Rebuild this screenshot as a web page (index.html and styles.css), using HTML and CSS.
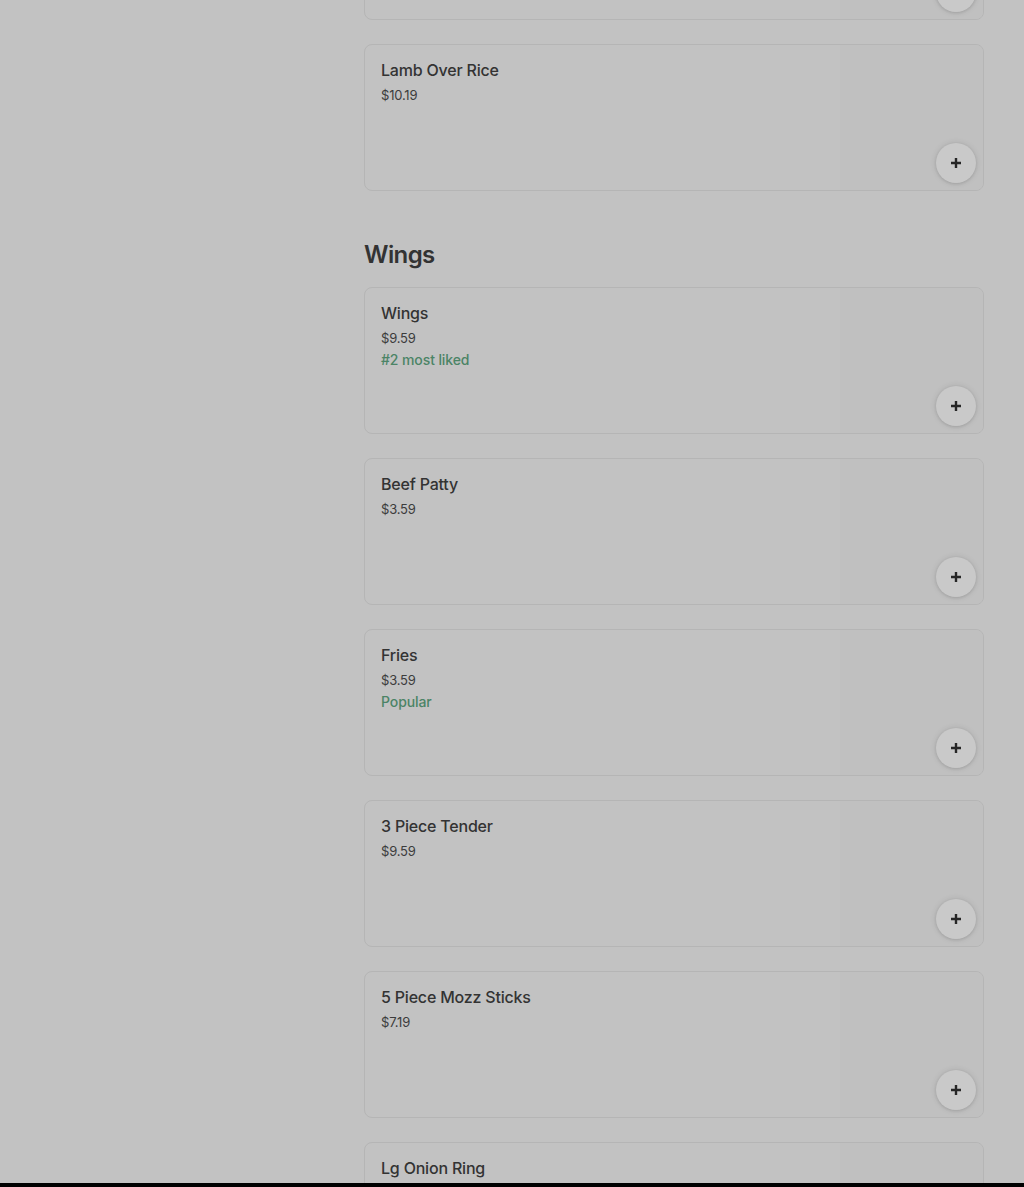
FILE: index.html
```html
<!DOCTYPE html>
<html lang="en">
<head>
  <meta charset="UTF-8">
  <meta name="viewport" content="width=device-width, initial-scale=1.0">
  <title>Menu</title>
  <link rel="stylesheet" href="styles.css">
</head>
<body>
  <div class="viewport">
    <div class="page">
      <aside class="sidebar"></aside>

      <main class="menu">
        <div class="item-list first-list">
          <div class="item-card">
            <div class="item-info"></div>
            <div class="item-image">
              <button class="add-btn" aria-label="Add"><svg viewBox="0 0 12 12" width="12" height="12"><path d="M6 1v10M1 6h10" stroke="#262626" stroke-width="2.4" fill="none"/></svg></button>
            </div>
          </div>
          <div class="item-card">
            <div class="item-info">
              <h3 class="item-name">Lamb Over Rice</h3>
              <p class="item-price">$10.19</p>
            </div>
            <div class="item-image">
              <button class="add-btn" aria-label="Add"><svg viewBox="0 0 12 12" width="12" height="12"><path d="M6 1v10M1 6h10" stroke="#262626" stroke-width="2.4" fill="none"/></svg></button>
            </div>
          </div>
        </div>

        <section class="menu-section">
          <h2 class="section-title">Wings</h2>
          <div class="item-list">
            <div class="item-card">
              <div class="item-info">
                <h3 class="item-name">Wings</h3>
                <p class="item-price">$9.59</p>
                <p class="item-badge">#2 most liked</p>
              </div>
              <div class="item-image">
                <button class="add-btn" aria-label="Add"><svg viewBox="0 0 12 12" width="12" height="12"><path d="M6 1v10M1 6h10" stroke="#262626" stroke-width="2.4" fill="none"/></svg></button>
              </div>
            </div>
            <div class="item-card">
              <div class="item-info">
                <h3 class="item-name">Beef Patty</h3>
                <p class="item-price">$3.59</p>
              </div>
              <div class="item-image">
                <button class="add-btn" aria-label="Add"><svg viewBox="0 0 12 12" width="12" height="12"><path d="M6 1v10M1 6h10" stroke="#262626" stroke-width="2.4" fill="none"/></svg></button>
              </div>
            </div>
            <div class="item-card">
              <div class="item-info">
                <h3 class="item-name">Fries</h3>
                <p class="item-price">$3.59</p>
                <p class="item-badge">Popular</p>
              </div>
              <div class="item-image">
                <button class="add-btn" aria-label="Add"><svg viewBox="0 0 12 12" width="12" height="12"><path d="M6 1v10M1 6h10" stroke="#262626" stroke-width="2.4" fill="none"/></svg></button>
              </div>
            </div>
            <div class="item-card">
              <div class="item-info">
                <h3 class="item-name">3 Piece Tender</h3>
                <p class="item-price">$9.59</p>
              </div>
              <div class="item-image">
                <button class="add-btn" aria-label="Add"><svg viewBox="0 0 12 12" width="12" height="12"><path d="M6 1v10M1 6h10" stroke="#262626" stroke-width="2.4" fill="none"/></svg></button>
              </div>
            </div>
            <div class="item-card">
              <div class="item-info">
                <h3 class="item-name">5 Piece Mozz Sticks</h3>
                <p class="item-price">$7.19</p>
              </div>
              <div class="item-image">
                <button class="add-btn" aria-label="Add"><svg viewBox="0 0 12 12" width="12" height="12"><path d="M6 1v10M1 6h10" stroke="#262626" stroke-width="2.4" fill="none"/></svg></button>
              </div>
            </div>
            <div class="item-card">
              <div class="item-info">
                <h3 class="item-name">Lg Onion Ring</h3>
              </div>
              <div class="item-image"></div>
            </div>
          </div>
        </section>
      </main>
    </div>
  </div>
</body>
</html>
```

FILE: styles.css
```css
* {
  margin: 0;
  padding: 0;
  box-sizing: border-box;
}

html {
  background-color: #000;
}

body {
  font-family: Inter, Roboto, 'Liberation Sans', sans-serif;
  color: #303030;
  line-height: 1.3;
}

.viewport {
  height: 1183px;
  overflow: hidden;
  background-color: #c2c2c2;
}

.page {
  display: flex;
}

.sidebar {
  width: 364px;
  flex-shrink: 0;
}

.menu {
  width: 620px;
}

.item-list {
  display: flex;
  flex-direction: column;
  gap: 24px;
}

.first-list {
  margin-top: -127px;
}

.menu-section {
  margin-top: 48px;
}

.section-title {
  font-size: 24px;
  font-weight: 600;
  line-height: 32px;
  color: #333;
  letter-spacing: -0.6px;
  margin-bottom: 16px;
}

.item-card {
  display: flex;
  height: 147px;
  border: 1px solid #b5b5b5;
  border-radius: 8px;
  overflow: hidden;
}

.item-info {
  flex: 1;
  padding: 13px 16px;
}

.item-name {
  font-size: 16px;
  font-weight: 500;
  line-height: 24px;
  color: #333;
  letter-spacing: -0.2px;
}

.item-price {
  font-size: 13px;
  line-height: 20px;
  color: #3c3c3c;
  letter-spacing: -0.2px;
  margin-top: 3px;
}

.item-badge {
  font-size: 14px;
  font-weight: 500;
  line-height: 20px;
  color: #4b8466;
  letter-spacing: -0.1px;
  margin-top: 2px;
}

.item-image {
  width: 143px;
  flex-shrink: 0;
  display: flex;
  align-items: flex-end;
  justify-content: flex-end;
  padding: 0 7px 7px 0;
  background-color: #c0c0c0;
}

.add-btn {
  width: 40px;
  height: 40px;
  border-radius: 50%;
  border: none;
  background-color: #c9c9c9;
  box-shadow: 0 0 6px rgba(0, 0, 0, 0.12), 0 1px 3px rgba(0, 0, 0, 0.1);
  display: flex;
  align-items: center;
  justify-content: center;
  cursor: pointer;
}
```
